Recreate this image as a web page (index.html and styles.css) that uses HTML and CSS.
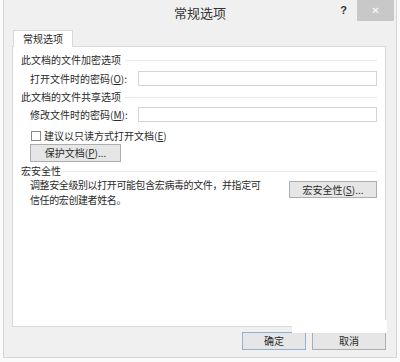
FILE: index.html
```html
<!DOCTYPE html>
<html lang="zh-CN">
<head>
    <meta charset="UTF-8">
    <title>常规选项</title>
    <link rel="stylesheet" href="styles.css">
</head>
<body>

<div class="window">
    <div class="titlebar">
        <span></span>
        <span class="title">常规选项</span>
        <div class="controls">
            <span class="help">?</span>
            <span class="close">✕</span>
        </div>
    </div>

    <div class="main">
        <div class="tabs">
            <div class="tab">常规选项</div>
        </div>

        <div class="panel">
            <div class="group-title">此文档的文件加密选项</div>
            <div class="field">
                <label>打开文件时的密码(<u>O</u>):</label>
                <div class="input"></div>
            </div>

            <div class="group-title second">此文档的文件共享选项</div>
            <div class="field field-2">
                <label>修改文件时的密码(<u>M</u>):</label>
                <div class="input"></div>
            </div>

            <div class="check-row">
                <span class="checkbox"></span>
                <span>建议以只读方式打开文档(<u>E</u>)</span>
            </div>
            <button class="btn protect">保护文档(<u>P</u>)...</button>

            <div class="group-title third">宏安全性</div>
            <div class="macro-row">
                <div class="desc">
                    <div>调整安全级别以打开可能包含宏病毒的文件，并指定可</div>
                    <div>信任的宏创建者姓名。</div>
                </div>
                <button class="btn macro">宏安全性(<u>S</u>)...</button>
            </div>
        </div>

        <div class="footer">
            <button class="btn ok">确定</button>
            <button class="btn cancel">取消</button>
        </div>
    </div>

    <div class="watermark"></div>
</div>

</body>
</html>
```

FILE: styles.css
```css
body {
    margin: 0;
    background-color: #fafafa;
    font-family: "Noto Sans CJK SC", "Noto Sans", sans-serif;
    font-size: 10px;
    color: #2a2a2a;
}

.window {
    position: relative;
    margin-left: 3px;
    width: 392px;
    height: 357px;
    background-color: #f0f0f0;
    border: 1px solid #d6d6d6;
    border-top: none;
}

.titlebar {
    display: grid;
    grid-template-columns: 1fr auto 1fr;
    height: 25px;
}

.title {
    font-size: 13px;
    line-height: 25px;
    color: #333;
}

.controls {
    display: flex;
    justify-content: flex-end;
    align-items: flex-start;
    gap: 10px;
    margin-right: 2px;
}

.help {
    font-family: "Liberation Sans", sans-serif;
    font-weight: bold;
    font-size: 11px;
    line-height: 20px;
    color: #333;
}

.close {
    width: 37px;
    height: 21px;
    background-color: #c8c8c8;
    color: #fff;
    font-family: "DejaVu Sans", sans-serif;
    font-size: 10px;
    line-height: 21px;
    text-align: center;
}

.main {
    padding: 0 10px 0 8px;
}

.tabs {
    display: flex;
    height: 21px;
    align-items: flex-end;
    padding-left: 1px;
}

.tab {
    position: relative;
    z-index: 1;
    margin-bottom: -1px;
    padding: 0 9px;
    height: 16px;
    line-height: 16px;
    background-color: #fff;
    border: 1px solid #d9d9d9;
    border-bottom: none;
}

.panel {
    height: 273px;
    padding: 6px 8px 0 8px;
    background-color: #fff;
    border: 1px solid #d9d9d9;
}

.group-title {
    display: flex;
    align-items: center;
    gap: 4px;
    line-height: 14px;
}

.group-title::after {
    content: "";
    flex: 1;
    height: 1px;
    background-color: #e8e8e8;
}

.group-title.second {
    margin-top: 4px;
}

.group-title.third {
    margin-top: 2px;
}

.field {
    display: flex;
    align-items: center;
    margin: 4px 0 0 9px;
    height: 15px;
}

.field-2 {
    margin-top: 3px;
}

.field label {
    width: 108px;
    line-height: 12px;
}

.input {
    flex: 1;
    height: 13px;
    border: 1px solid #d5d5d5;
    background-color: #fff;
}

.check-row {
    display: flex;
    align-items: center;
    gap: 3px;
    margin: 8px 0 0 10px;
    height: 12px;
    line-height: 12px;
}

.checkbox {
    width: 8px;
    height: 8px;
    border: 1px solid #8a8a8a;
    background-color: #fff;
}

.btn {
    font-family: "Noto Sans CJK SC", "Noto Sans", sans-serif;
    font-size: 10px;
    color: #2a2a2a;
    padding: 0;
    height: 18px;
    line-height: 16px;
    background-color: #e6e6e6;
    border: 1px solid #adadad;
}

.protect {
    display: block;
    width: 91px;
    margin: 2px 0 0 9px;
}

.macro-row {
    display: flex;
    justify-content: space-between;
    align-items: flex-start;
    margin: 0 0 0 9px;
}

.desc {
    line-height: 14.5px;
    letter-spacing: -0.4px;
}

.macro {
    width: 88px;
    height: 17px;
    margin-top: 3px;
}

.footer {
    display: flex;
    justify-content: flex-end;
    gap: 6px;
    margin-top: 5px;
}

.ok {
    width: 64px;
    border-color: #8db2d6;
}

.cancel {
    width: 74px;
}

.watermark {
    position: absolute;
    left: 288px;
    top: 320px;
    width: 95px;
    height: 13px;
    background-color: #fff;
}
```
